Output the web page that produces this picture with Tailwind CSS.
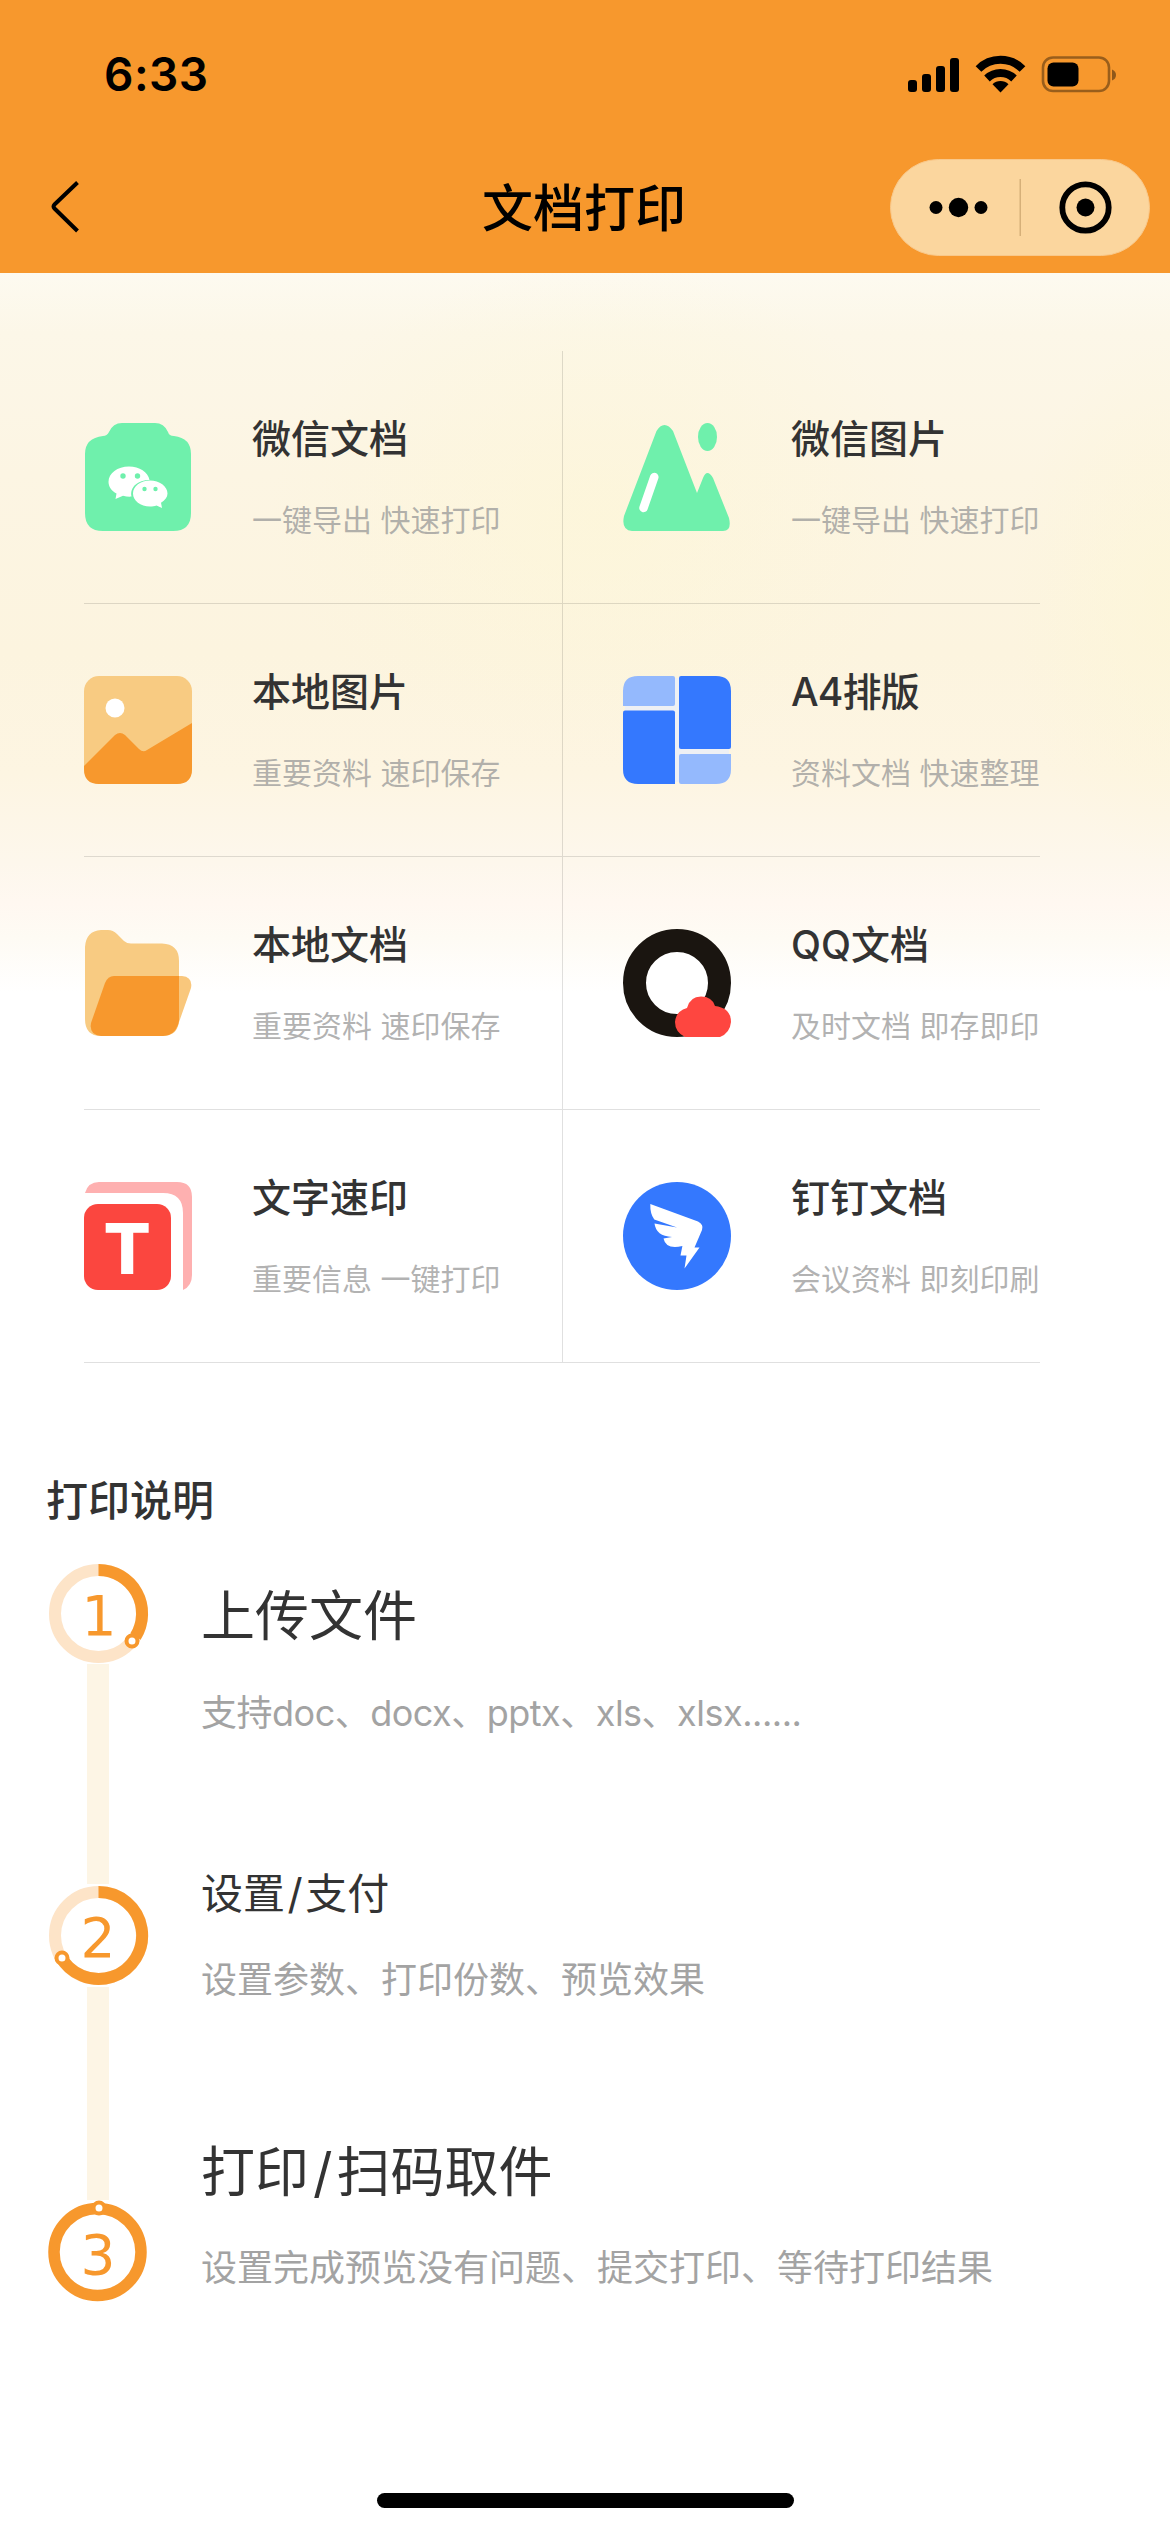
<!DOCTYPE html>
<html lang="zh-CN">
<head>
<meta charset="utf-8">
<title>文档打印</title>
<script src="https://cdn.jsdelivr.net/npm/@tailwindcss/browser@4"></script>
</head>
<body class="w-[1170px] h-[2532px] overflow-hidden bg-white text-[#333] font-['Inter','Noto_Sans_CJK_SC',sans-serif] flex flex-col">

<header class="h-[273px] shrink-0 bg-[#f7982d] text-black flex flex-col">
  <div class="h-[148px] flex items-center justify-between pl-[104px] pr-[53px]">
    <div class="text-[46px] leading-[60px] font-semibold tracking-[0.5px]">6:33</div>
    <svg width="210" height="40" viewBox="0 0 210 40">
      <rect x="1" y="26" width="9" height="12" rx="3"/>
      <rect x="15" y="20" width="9" height="18" rx="3"/>
      <rect x="29" y="12" width="9" height="26" rx="3"/>
      <rect x="43" y="4" width="9" height="34" rx="3"/>
      <g fill="none" stroke="#000" stroke-width="8">
        <path d="M71.500 15a31 31 0 0 1 44 0"/>
        <path d="M80 24.500a19.500 19.500 0 0 1 27 0"/>
      </g>
      <path d="M93.500 38.500l-8-8.300a11.500 11.500 0 0 1 16 0z"/>
      <rect x="136" y="3.500" width="66" height="33.500" rx="10" fill="none" stroke="#000" stroke-opacity=".38" stroke-width="2.600"/>
      <rect x="140.500" y="8.500" width="31" height="24" rx="6"/>
      <path d="M205 15.500q4 1.500 4 5.500t-4 5.500z" fill-opacity=".42"/>
    </svg>
  </div>
  <div class="h-[118px] flex items-center justify-between pl-[50px] pr-[20px]">
    <svg width="260" height="60" viewBox="0 0 260 60" fill="none" stroke="#000" stroke-width="4"><path d="M27.500 5.500L4.500 27.500Q2.500 29.500 4.500 31.500L27.500 54"/></svg>
    <h1 class="text-[51px] leading-[60px] font-medium -ml-[32px] mt-[3px]">文档打印</h1>
    <div class="w-[260px] h-[97px] rounded-full bg-[#fbd69e] border border-[#f9c88a] flex items-center">
      <svg width="258" height="96" viewBox="0 0 258 96">
        <circle cx="45" cy="48.500" r="6.500"/><circle cx="67.500" cy="48.500" r="9.700"/><circle cx="90" cy="48.500" r="6.500"/>
        <rect x="128.500" y="20" width="1.500" height="57" fill="#d6b079"/>
        <circle cx="194.500" cy="48.500" r="23.200" fill="none" stroke="#000" stroke-width="5.800"/><circle cx="194.500" cy="48.500" r="9"/>
      </svg>
    </div>
  </div>
</header>

<main class="flex-1 flex flex-col bg-[radial-gradient(ellipse_330px_250px_at_600px_240px,rgba(253,246,215,0.65),rgba(253,246,215,0)),radial-gradient(ellipse_160px_260px_at_1170px_330px,rgba(253,246,215,0.7),rgba(253,246,215,0)),linear-gradient(to_bottom,#fdfaf0_0px,#fcf7e8_60px,#fcf5e3_200px,#fcf4df_380px,#fdf5e2_500px,#fdf7ec_590px,#fff8f1_630px,#fefbf4_665px,#ffffff_720px)]">
  <section class="mt-[78px] ml-[84px] w-[956px] grid grid-cols-[479px_477px] auto-rows-[253px]">
    <div class="flex items-start border-r border-b border-black/12 gap-[60px] pt-[61px]">
      <svg class="mt-[11px] shrink-0" width="108" height="108" viewBox="0 0 108 108">
        <path d="M38 0H71Q80 0 84 9Q85 13 90 13Q107 15 107 31V90Q107 108 89 108H19Q1 108 1 90V31Q1 15 19 13Q23 13 25 9Q29 0 38 0Z" fill="#6ff0ac"/>
        <path d="M45 43.500c-11.500 0-20.500 6.800-20.500 15.300 0 5 3 9 8 11.700L31.500 76l7.500-3.200c3 .7 5.500 1 8.500.8C45.500 64 54 57 65.500 57 64 49 55.500 43.500 45 43.500Z" fill="#fff"/>
        <path d="M66 57.500c-9.500 0-17 5.800-17 13S56.500 83.500 66 83.500c2.500 0 4.500-.3 6.500-1L78 85l-1-5.200c4-2.500 6.500-5.600 6.500-9.300 0-7.200-8-13-17.500-13Z" fill="#fff"/>
        <g fill="#6ff0ac"><circle cx="39" cy="53" r="2.700"/><circle cx="53.500" cy="53" r="2.700"/><circle cx="60.500" cy="66" r="2.200"/><circle cx="71.500" cy="66" r="2.200"/></g>
      </svg>
      <div><h2 class="text-[39px] leading-[54px] font-medium">微信文档</h2><p class="mt-[34px] text-[30px] leading-10 text-[#999]/75 whitespace-nowrap">一键导出 快速打印</p></div>
    </div>
    <div class="flex items-start border-b border-black/12 gap-[60px] pt-[61px] pl-[60px]">
      <svg class="mt-[11px] shrink-0" width="108" height="108" viewBox="0 0 108 108">
        <path d="M33.500 8Q37 2 41.500 2T50 8L74 70 80 55Q82 50 84.500 50T90 55L106 95Q109 108 100 108H9Q-2 107 1 93Z" fill="#6ff0ac"/>
        <ellipse cx="84.500" cy="14" rx="9.500" ry="14" fill="#6ff0ac"/>
        <path d="M31.300 54L20.500 85" stroke="#fff" stroke-width="8.500" stroke-linecap="round"/>
      </svg>
      <div><h2 class="text-[39px] leading-[54px] font-medium">微信图片</h2><p class="mt-[34px] text-[30px] leading-10 text-[#999]/75 whitespace-nowrap">一键导出 快速打印</p></div>
    </div>

    <div class="flex items-start border-r border-b border-black/12 gap-[60px] pt-[61px]">
      <svg class="mt-[11px] shrink-0" width="108" height="108" viewBox="0 0 108 108">
        <rect width="108" height="108" rx="15" fill="#f8cb82"/>
        <path d="M0 90L31 59Q36 55 41 59L55 73Q59 77 63 74L108 47V93Q108 108 93 108H15Q0 108 0 93Z" fill="#f7982d"/>
        <circle cx="31" cy="32" r="9.500" fill="#fff"/>
      </svg>
      <div><h2 class="text-[39px] leading-[54px] font-medium">本地图片</h2><p class="mt-[34px] text-[30px] leading-10 text-[#999]/75 whitespace-nowrap">重要资料 速印保存</p></div>
    </div>
    <div class="flex items-start border-b border-black/12 gap-[60px] pt-[61px] pl-[60px]">
      <svg class="mt-[11px] shrink-0" width="108" height="108" viewBox="0 0 108 108">
        <rect x="2" y="2" width="104" height="104" rx="14" fill="#eef0f4"/>
        <path d="M15 0H50Q52 0 52 2V28Q52 30 50 30H0V15Q0 0 15 0Z" fill="#94b9fd"/>
        <path d="M2 34.500H50Q52 34.500 52 36.500V108H15Q0 108 0 93V36.500Q0 34.500 2 34.500Z" fill="#3478fe"/>
        <path d="M58 0H93Q108 0 108 15V71Q108 73 106 73H58Q56 73 56 71V2Q56 0 58 0Z" fill="#3478fe"/>
        <path d="M58 78H108V93Q108 108 93 108H58Q56 108 56 106V80Q56 78 58 78Z" fill="#94b9fd"/>
      </svg>
      <div><h2 class="text-[39px] leading-[54px] font-medium tracking-[-0.8px]">A4排版</h2><p class="mt-[34px] text-[30px] leading-10 text-[#999]/75 whitespace-nowrap">资料文档 快速整理</p></div>
    </div>

    <div class="flex items-start border-r border-b border-black/12 gap-[60px] pt-[61px]">
      <svg class="mt-[11px] shrink-0" width="108" height="108" viewBox="0 0 108 108">
        <path d="M17 1H24Q29 1 33 5L40 12Q43 14.500 47 14.500H78Q95 15 95 32V90Q95 107 78 107H17Q1 107 1 90V18Q2 2 17 1Z" fill="#f8cb82"/>
        <path d="M30 47H98Q109 48 107 59L94 96Q90 107 79 107H17Q5 106 7 94L21 54Q24 47 30 47Z" fill="#f9c77c"/>
        <path d="M30 47H95V92L94 96Q90 107 79 107H17Q5 106 7 94L21 54Q24 47 30 47Z" fill="#f7982d"/>
      </svg>
      <div><h2 class="text-[39px] leading-[54px] font-medium">本地文档</h2><p class="mt-[34px] text-[30px] leading-10 text-[#999]/75 whitespace-nowrap">重要资料 速印保存</p></div>
    </div>
    <div class="flex items-start border-b border-black/12 gap-[60px] pt-[61px] pl-[60px]">
      <svg class="mt-[11px] shrink-0" width="108" height="108" viewBox="0 0 108 108">
        <circle cx="54" cy="54" r="42.500" fill="#fff" stroke="#1a1510" stroke-width="23"/>
        <path d="M64 79Q67 67.500 78 67.500T92 77Q108 79 108 93Q107 104 97 108H62Q52 103 52 93Q53 82 64 79Z" fill="#fe4640"/>
      </svg>
      <div><h2 class="text-[39px] leading-[54px] font-medium">QQ文档</h2><p class="mt-[34px] text-[30px] leading-10 text-[#999]/75 whitespace-nowrap">及时文档 即存即印</p></div>
    </div>

    <div class="flex items-start border-r border-b border-black/12 gap-[60px] pt-[61px]">
      <svg class="mt-[11px] shrink-0" width="108" height="108" viewBox="0 0 108 108">
        <path d="M1 11Q4 0 15 0H93Q108 0 108 15V93Q108 104 99 108V31Q99 11 79 11Z" fill="#feb0b0"/>
        <rect y="22" width="87" height="86" rx="14" fill="#fb463f"/>
        <text x="43.300" y="91.500" text-anchor="middle" font-family="Inter" font-weight="800" font-size="70" fill="#fff">T</text>
      </svg>
      <div><h2 class="text-[39px] leading-[54px] font-medium">文字速印</h2><p class="mt-[34px] text-[30px] leading-10 text-[#999]/75 whitespace-nowrap">重要信息 一键打印</p></div>
    </div>
    <div class="flex items-start border-b border-black/12 gap-[60px] pt-[61px] pl-[60px]">
      <svg class="mt-[11px] shrink-0" width="108" height="108" viewBox="0 0 108 108">
        <circle cx="54" cy="54" r="54" fill="#3478fe"/>
        <path d="M27.300 22L75 39.500Q81 42.500 79 48L71.500 65.500H76.500L61.500 86.500 63.500 73.500H57.500L59.400 64Q43 68 40.500 56.500L49 55Q33 54 31.500 41.500L54 45.500 31.300 37.500Q27 32 27.300 22Z" fill="#fff"/>
      </svg>
      <div><h2 class="text-[39px] leading-[54px] font-medium">钉钉文档</h2><p class="mt-[34px] text-[30px] leading-10 text-[#999]/75 whitespace-nowrap">会议资料 即刻印刷</p></div>
    </div>
  </section>

  <section class="mt-[108px] pl-[46px] flex flex-col">
    <h2 class="text-[42px] leading-[60px] font-medium">打印说明</h2>
    <div class="mt-[31px] flex h-[322px] gap-[51px]">
      <div class="w-[104px] flex flex-col items-center">
        <svg class="shrink-0" width="104" height="104" viewBox="0 0 104 104">
          <circle cx="52.500" cy="51.500" r="43.500" fill="#fff" stroke="#fde4c8" stroke-width="12"/>
          <path d="M52.500 8A43.500 43.500 0 0 1 89.500 74.500" fill="none" stroke="#f7982d" stroke-width="12"/>
          <circle cx="86" cy="79" r="5.500" fill="#fff" stroke="#f7982d" stroke-width="4"/>
          <text x="53" y="72.500" text-anchor="middle" font-family="DejaVu Sans" font-size="55" fill="#f7982d">1</text>
        </svg>
        <div class="w-[22px] -mt-[2px] flex-1 bg-[#fdf5e5]"></div>
      </div>
      <div>
        <h3 class="mt-[25px] text-[54px] leading-[60px] font-normal">上传文件</h3>
        <p class="mt-[41px] text-[36px] leading-[50px] text-[#a3a3a3] tracking-[-0.5px]">支持doc、docx、pptx、xls、xlsx......</p>
      </div>
    </div>
    <div class="flex h-[316px] gap-[51px]">
      <div class="w-[104px] flex flex-col items-center">
        <svg class="shrink-0" width="104" height="104" viewBox="0 0 104 104">
          <circle cx="52.500" cy="51.500" r="43.500" fill="#fff" stroke="#fde4c8" stroke-width="12"/>
          <path d="M52.500 8A43.500 43.500 0 1 1 14 71.500" fill="none" stroke="#f7982d" stroke-width="12"/>
          <circle cx="16" cy="74" r="5.500" fill="#fff" stroke="#f7982d" stroke-width="4"/>
          <text x="52" y="73" text-anchor="middle" font-family="DejaVu Sans" font-size="55" fill="#f7982d">2</text>
        </svg>
        <div class="w-[22px] -mt-[1px] flex-1 bg-[#fdf5e5]"></div>
      </div>
      <div>
        <h3 class="-mt-[11px] text-[42px] leading-[42px] font-normal">设置<span class="px-[2.5px]">/</span>支付</h3>
        <p class="mt-10 text-[36px] leading-[50px] text-[#a3a3a3]">设置参数、打印份数、预览效果</p>
      </div>
    </div>
    <div class="flex h-[104px] gap-[51px]">
      <svg class="shrink-0" width="104" height="104" viewBox="0 0 104 104">
        <circle cx="51.500" cy="52" r="43.500" fill="#fff" stroke="#f7982d" stroke-width="11.500"/>
        <circle cx="53" cy="8" r="5.500" fill="#fff" stroke="#f7982d" stroke-width="4"/>
        <text x="52" y="74" text-anchor="middle" font-family="DejaVu Sans" font-size="55" fill="#f7982d">3</text>
      </svg>
      <div>
        <h3 class="-mt-[57px] text-[54px] leading-[60px] font-normal">打印<span class="px-[4px]">/</span>扫码取件</h3>
        <p class="mt-10 text-[36px] leading-[50px] text-[#a3a3a3]">设置完成预览没有问题、提交打印、等待打印结果</p>
      </div>
    </div>
  </section>

  <div class="mt-auto mb-[24px] mx-auto w-[417px] h-[15px] rounded-full bg-black"></div>
</main>
</body>
</html>
